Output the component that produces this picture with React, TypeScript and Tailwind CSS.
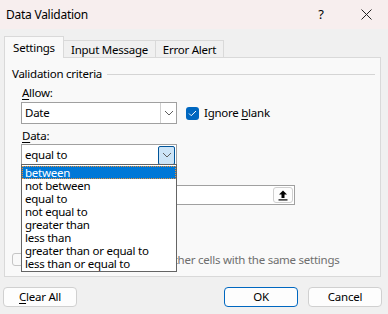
import React from 'react'

const items = [
  'between',
  'not between',
  'equal to',
  'not equal to',
  'greater than',
  'less than',
  'greater than or equal to',
  'less than or equal to',
]

function Chevron() {
  return (
    <svg width="10" height="6" viewBox="0 0 10 6" fill="none">
      <path d="M1 1l4 4 4-4" stroke="#5f5f5f" strokeWidth="1" />
    </svg>
  )
}

export default function App() {
  return (
    <div
      className="w-[388px] h-[314px] bg-[#f0f0f0] text-[11.5px] tracking-[-0.25px] text-black relative overflow-hidden"
      style={{ fontFamily: '"Noto Sans", "Open Sans", sans-serif' }}
    >
      {/* title bar */}
      <div className="h-[29px] bg-[#f7eeee] flex items-center pl-[6px]">
        <span className="text-[12px]">Data Validation</span>
        <span className="ml-auto w-[14px] text-center text-[13px]">?</span>
        <span className="ml-[32px] mr-[16px] w-[12px] h-[12px] flex items-center justify-center">
          <svg width="11" height="11" viewBox="0 0 11 11">
            <path d="M0.5 0.5l10 10M10.5 0.5l-10 10" stroke="#222" strokeWidth="1" />
          </svg>
        </span>
      </div>

      {/* tabs */}
      <div className="mt-[7px] px-[4px] flex items-end h-[22px] relative z-10">
        <div className="w-[60px] h-[22px] bg-[#f9f9f9] border border-[#d9d9d9] border-b-0 flex items-center justify-center pt-[1px]">
          Settings
        </div>
        <div className="w-[92px] h-[18px] border border-l-0 border-[#d9d9d9] border-b-0 flex items-center justify-center">
          Input Message
        </div>
        <div className="w-[68px] h-[18px] border border-l-0 border-[#d9d9d9] border-b-0 flex items-center justify-center">
          Error Alert
        </div>
      </div>

      {/* panel */}
      <div className="mx-[4px] -mt-[1px] w-[377px] h-[220px] bg-[#f9f9f9] border border-[#d9d9d9] relative">
        <div className="pt-[8px] pl-[7px] pr-[5px] flex items-center h-[24px]">
          <span>Validation criteria</span>
          <div className="flex-1 h-px bg-[#d5d5d5] ml-[5px]" />
        </div>

        <div className="pl-[17px] mt-[3px] leading-[16px]">
          <span className="underline underline-offset-2">A</span>llow:
        </div>
        <div className="pl-[16px] mt-[1px] flex items-center">
          <div className="w-[156px] h-[22px] bg-white border border-[#a0a0a0] flex items-center">
            <span className="pl-[3px] flex-1">Date</span>
            <div className="w-[16px] h-[20px] border-l border-[#d0d0d0] flex items-center justify-center">
              <Chevron />
            </div>
          </div>
          <div className="ml-[9px] w-[13px] h-[13px] rounded-[3px] bg-[#0067c0] flex items-center justify-center">
            <svg width="9" height="7" viewBox="0 0 9 7" fill="none">
              <path d="M1 3.5l2.2 2.2L8 1" stroke="#fff" strokeWidth="1" />
            </svg>
          </div>
          <span className="ml-[5px]">
            Ignore <span className="underline underline-offset-2">b</span>lank
          </span>
        </div>

        <div className="pl-[17px] mt-[4px] leading-[16px]">
          <span className="underline underline-offset-2">D</span>ata:
        </div>
        <div className="pl-[16px]">
          <div className="w-[156px] h-[22px] bg-white border border-[#a0a0a0] flex items-center">
            <span className="pl-[3px] flex-1">equal to</span>
            <div className="w-[17px] h-[19px] mr-px rounded-[2px] bg-[#cce4f7] border border-[#005499] flex items-center justify-center">
              <Chevron />
            </div>
          </div>
        </div>

        <div className="pl-[16px] mt-[19px]">
          <div className="w-[274px] h-[20px] bg-white border border-[#a0a0a0] flex items-center justify-end pr-[1px]">
            <div className="w-[20px] h-[16px] rounded-[3px] bg-[#fdfdfd] border border-[#cfcfcf] flex items-center justify-center">
              <svg width="10" height="11" viewBox="0 0 10 11">
                <path d="M5 0.5L1 4.5h2.5V8h3V4.5H9z" fill="#000" />
                <rect x="0.5" y="9.3" width="9" height="1.2" fill="#000" />
              </svg>
            </div>
          </div>
        </div>

        <div className="pl-[7px] mt-[46px] flex items-center">
          <div className="w-[13px] h-[13px] rounded-[3px] border border-[#c5c5c5] bg-[#f9f9f9]" />
          <span className="ml-[5px] text-[#6e6e6e]">
            Apply these changes to all other cells with the same settings
          </span>
        </div>

        {/* open dropdown list */}
        <div className="absolute left-[16px] top-[106px] w-[156px] bg-white border border-[#646464] py-px z-20">
          {items.map((t, i) => (
            <div
              key={t}
              className={
                i === 0
                  ? 'h-[13px] leading-[13px] pl-[3px] bg-[#0078d7] text-white outline outline-1 outline-dotted outline-[#e8913a] -outline-offset-1'
                  : 'h-[13px] leading-[13px] pl-[3px]'
              }
            >
              {t}
            </div>
          ))}
        </div>
      </div>

      {/* buttons */}
      <div className="mt-[10px] px-[3px] flex items-center">
        <button className="w-[74px] h-[20px] bg-[#fdfdfd] border border-[#d0d0d0] rounded-[4px] flex items-center justify-center">
          <span>
            <span className="underline underline-offset-2">C</span>lear All
          </span>
        </button>
        <button className="ml-auto w-[74px] h-[20px] bg-[#fdfdfd] border border-[#0067c0] rounded-[4px] flex items-center justify-center">
          OK
        </button>
        <button className="ml-[10px] mr-[3px] w-[74px] h-[20px] bg-[#fdfdfd] border border-[#d0d0d0] rounded-[4px] flex items-center justify-center">
          Cancel
        </button>
      </div>
    </div>
  )
}
